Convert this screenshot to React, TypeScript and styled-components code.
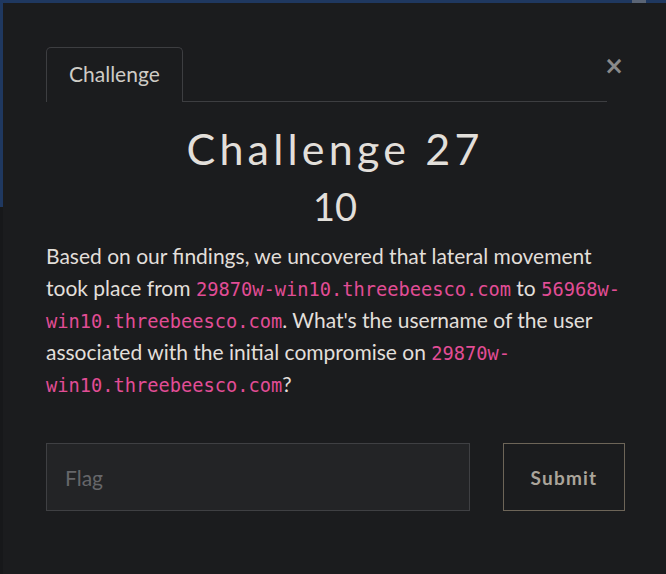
import React from "react";
import styled, { createGlobalStyle } from "styled-components";

const Global = createGlobalStyle`
  html, body { margin: 0; padding: 0; }
  body {
    width: 666px;
    height: 574px;
    overflow: hidden;
    background: linear-gradient(to bottom, #1f3860 0, #1f3860 207px, #17181a 207px);
    font-family: Lato, "Liberation Sans", sans-serif;
  }
`;

const Page = styled.div`
  padding: 3px 0 0 3px;
  height: 574px;
  box-sizing: border-box;
  position: relative;
`;

const BgScroll = styled.div`
  position: absolute;
  top: 0;
  left: 632px;
  width: 14px;
  height: 3px;
  background: #5a6475;
`;

const Modal = styled.div`
  background: #1b1c1e;
  height: 571px;
  box-sizing: border-box;
  padding: 44px 42px 0 43px;
  position: relative;
`;

const TabBar = styled.div`
  display: flex;
  border-bottom: 1px solid #3d3e41;
  height: 55px;
  box-sizing: border-box;
  margin-right: 17px;
`;

const Tab = styled.div`
  border: 1px solid #3d3e41;
  border-bottom: none;
  border-radius: 5px 5px 0 0;
  padding: 0 22px 3px;
  margin-bottom: -1px;
  background: #1b1c1e;
  display: flex;
  align-items: center;
  color: #cfccc6;
  font-size: 21px;
  height: 55px;
  box-sizing: border-box;
`;

const Close = styled.div`
  position: absolute;
  top: 51px;
  right: 42px;
  color: #8a8a8a;
  font-size: 24px;
  font-weight: 700;
  line-height: 1;
  font-family: "DejaVu Sans", sans-serif;
`;

const Title = styled.h2`
  margin: 21px 0 0;
  text-align: center;
  color: #e2dfda;
  font-family: Lato, sans-serif;
  font-weight: 400;
  font-size: 43px;
  letter-spacing: 4.2px;
  line-height: 52px;
`;

const Value = styled.h3`
  margin: 9px 0 0;
  text-align: center;
  color: #e2dfda;
  font-family: Lato, sans-serif;
  font-weight: 400;
  font-size: 38px;
  line-height: 44px;
`;

const Desc = styled.p`
  margin: 12px 0 0;
  color: #e2dfda;
  font-size: 21px;
  line-height: 32px;
`;

const Code = styled.code`
  font-family: "DejaVu Sans Mono", monospace;
  font-size: 18.7px;
  line-height: 1;
  color: #e24d96;
`;

const FormRow = styled.div`
  display: grid;
  grid-template-columns: 424px 122px;
  column-gap: 33px;
  margin-top: 43px;
`;

const FlagInput = styled.input`
  height: 68px;
  box-sizing: border-box;
  background: #232426;
  border: 1px solid #3f4043;
  color: #ddd;
  font-family: Lato, sans-serif;
  font-size: 21px;
  padding: 0 18px;
  outline: none;
  &::placeholder { color: #66676a; }
`;

const SubmitButton = styled.button`
  height: 68px;
  box-sizing: border-box;
  background: transparent;
  border: 1px solid #6d6558;
  color: #aaa49a;
  font-family: Lato, sans-serif;
  font-weight: 700;
  font-size: 19px;
  letter-spacing: 1.2px;
`;

export default function App() {
  return (
    <>
      <Global />
      <Page>
        <BgScroll />
        <Modal>
          <TabBar>
            <Tab>Challenge</Tab>
          </TabBar>
          <Close>×</Close>
          <Title>Challenge 27</Title>
          <Value>10</Value>
          <Desc>
            Based on our findings, we uncovered that lateral movement took place from{" "}
            <Code>29870w-win10.threebeesco.com</Code> to <Code>56968w-win10.threebeesco.com</Code>. What's the
            username of the user associated with the initial compromise on{" "}
            <Code>29870w-win10.threebeesco.com</Code>?
          </Desc>
          <FormRow>
            <FlagInput placeholder="Flag" />
            <SubmitButton>Submit</SubmitButton>
          </FormRow>
        </Modal>
      </Page>
    </>
  );
}
